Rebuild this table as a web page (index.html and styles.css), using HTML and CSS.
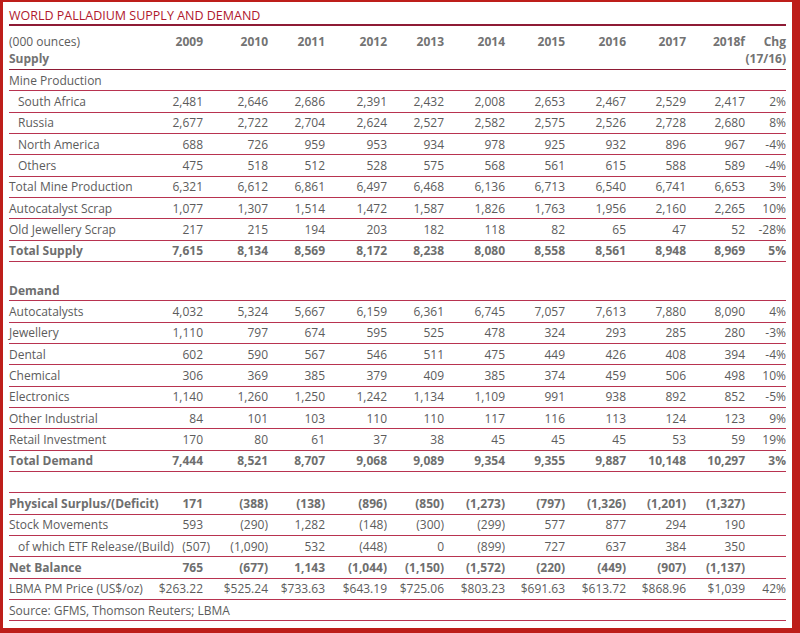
FILE: index.html
```html
<!DOCTYPE html>
<html>
<head>
<meta charset="utf-8">
<link rel="stylesheet" href="styles.css">
</head>
<body>
<div class="panel">
  <div class="title">WORLD PALLADIUM SUPPLY AND DEMAND</div>
  <table class="data">
    <colgroup>
      <col class="c-label"><col class="c-09"><col class="c-10"><col class="c-11"><col class="c-12"><col class="c-13"><col class="c-14"><col class="c-15"><col class="c-16"><col class="c-17"><col class="c-18"><col class="c-chg">
    </colgroup>
    <thead>
      <tr class="head">
        <th class="label"><span class="unit">(000 ounces)</span><br>Supply</th>
        <th>2009</th><th>2010</th><th>2011</th><th>2012</th><th>2013</th><th>2014</th><th>2015</th><th>2016</th><th>2017</th><th>2018f</th><th>Chg<br>(17/16)</th>
      </tr>
    </thead>
    <tbody>
      <tr><td class="label">Mine Production</td><td></td><td></td><td></td><td></td><td></td><td></td><td></td><td></td><td></td><td></td><td></td></tr>
      <tr><td class="label sub">South Africa</td><td>2,481</td><td>2,646</td><td>2,686</td><td>2,391</td><td>2,432</td><td>2,008</td><td>2,653</td><td>2,467</td><td>2,529</td><td>2,417</td><td>2%</td></tr>
      <tr><td class="label sub">Russia</td><td>2,677</td><td>2,722</td><td>2,704</td><td>2,624</td><td>2,527</td><td>2,582</td><td>2,575</td><td>2,526</td><td>2,728</td><td>2,680</td><td>8%</td></tr>
      <tr><td class="label sub">North America</td><td>688</td><td>726</td><td>959</td><td>953</td><td>934</td><td>978</td><td>925</td><td>932</td><td>896</td><td>967</td><td>-4%</td></tr>
      <tr><td class="label sub">Others</td><td>475</td><td>518</td><td>512</td><td>528</td><td>575</td><td>568</td><td>561</td><td>615</td><td>588</td><td>589</td><td>-4%</td></tr>
      <tr><td class="label">Total Mine Production</td><td>6,321</td><td>6,612</td><td>6,861</td><td>6,497</td><td>6,468</td><td>6,136</td><td>6,713</td><td>6,540</td><td>6,741</td><td>6,653</td><td>3%</td></tr>
      <tr><td class="label">Autocatalyst Scrap</td><td>1,077</td><td>1,307</td><td>1,514</td><td>1,472</td><td>1,587</td><td>1,826</td><td>1,763</td><td>1,956</td><td>2,160</td><td>2,265</td><td>10%</td></tr>
      <tr><td class="label">Old Jewellery Scrap</td><td>217</td><td>215</td><td>194</td><td>203</td><td>182</td><td>118</td><td>82</td><td>65</td><td>47</td><td>52</td><td>-28%</td></tr>
      <tr class="bold"><td class="label">Total Supply</td><td>7,615</td><td>8,134</td><td>8,569</td><td>8,172</td><td>8,238</td><td>8,080</td><td>8,558</td><td>8,561</td><td>8,948</td><td>8,969</td><td>5%</td></tr>
      <tr class="gap"><td colspan="12"></td></tr>
      <tr class="bold"><td class="label">Demand</td><td></td><td></td><td></td><td></td><td></td><td></td><td></td><td></td><td></td><td></td><td></td></tr>
      <tr><td class="label">Autocatalysts</td><td>4,032</td><td>5,324</td><td>5,667</td><td>6,159</td><td>6,361</td><td>6,745</td><td>7,057</td><td>7,613</td><td>7,880</td><td>8,090</td><td>4%</td></tr>
      <tr><td class="label">Jewellery</td><td>1,110</td><td>797</td><td>674</td><td>595</td><td>525</td><td>478</td><td>324</td><td>293</td><td>285</td><td>280</td><td>-3%</td></tr>
      <tr><td class="label">Dental</td><td>602</td><td>590</td><td>567</td><td>546</td><td>511</td><td>475</td><td>449</td><td>426</td><td>408</td><td>394</td><td>-4%</td></tr>
      <tr><td class="label">Chemical</td><td>306</td><td>369</td><td>385</td><td>379</td><td>409</td><td>385</td><td>374</td><td>459</td><td>506</td><td>498</td><td>10%</td></tr>
      <tr><td class="label">Electronics</td><td>1,140</td><td>1,260</td><td>1,250</td><td>1,242</td><td>1,134</td><td>1,109</td><td>991</td><td>938</td><td>892</td><td>852</td><td>-5%</td></tr>
      <tr><td class="label">Other Industrial</td><td>84</td><td>101</td><td>103</td><td>110</td><td>110</td><td>117</td><td>116</td><td>113</td><td>124</td><td>123</td><td>9%</td></tr>
      <tr><td class="label">Retail Investment</td><td>170</td><td>80</td><td>61</td><td>37</td><td>38</td><td>45</td><td>45</td><td>45</td><td>53</td><td>59</td><td>19%</td></tr>
      <tr class="bold"><td class="label">Total Demand</td><td>7,444</td><td>8,521</td><td>8,707</td><td>9,068</td><td>9,089</td><td>9,354</td><td>9,355</td><td>9,887</td><td>10,148</td><td>10,297</td><td>3%</td></tr>
      <tr class="blank"><td colspan="12"></td></tr>
      <tr class="bold"><td class="label">Physical Surplus/(Deficit)</td><td>171</td><td>(388)</td><td>(138)</td><td>(896)</td><td>(850)</td><td>(1,273)</td><td>(797)</td><td>(1,326)</td><td>(1,201)</td><td>(1,327)</td><td></td></tr>
      <tr><td class="label">Stock Movements</td><td>593</td><td>(290)</td><td>1,282</td><td>(148)</td><td>(300)</td><td>(299)</td><td>577</td><td>877</td><td>294</td><td>190</td><td></td></tr>
      <tr><td class="label sub">of which ETF Release/(Build)</td><td><span class="hang">(507)</span></td><td>(1,090)</td><td>532</td><td>(448)</td><td>0</td><td>(899)</td><td>727</td><td>637</td><td>384</td><td>350</td><td></td></tr>
      <tr class="bold"><td class="label">Net Balance</td><td>765</td><td>(677)</td><td>1,143</td><td>(1,044)</td><td>(1,150)</td><td>(1,572)</td><td>(220)</td><td>(449)</td><td>(907)</td><td>(1,137)</td><td></td></tr>
      <tr><td class="label">LBMA PM Price (US$/oz)</td><td>$263.22</td><td>$525.24</td><td>$733.63</td><td>$643.19</td><td>$725.06</td><td>$803.23</td><td>$691.63</td><td>$613.72</td><td>$868.96</td><td>$1,039</td><td>42%</td></tr>
      <tr><td class="label source" colspan="12">Source: GFMS, Thomson Reuters; LBMA</td></tr>
    </tbody>
  </table>
</div>
</body>
</html>
```

FILE: styles.css
```css
html, body {
  margin: 0;
  padding: 0;
}
body {
  background: #bd1e1a;
  width: 800px;
  height: 633px;
  padding: 2px 8px 5px 3px;
  box-sizing: border-box;
  font-family: "Open Sans", "Noto Sans", sans-serif;
  font-size: 12px;
  color: #5c5c5c;
}
.panel {
  background: #ffffff;
  height: 626px;
  padding: 0 6px;
  box-sizing: border-box;
}
.title {
  color: #b0182c;
  font-size: 12.5px;
  line-height: 17px;
  padding-top: 5px;
  border-bottom: 2px solid #8e1b35;
}
.data {
  width: 777px;
  border-collapse: collapse;
  table-layout: fixed;
}
.c-label { width: 139px; }
.c-09 { width: 55px; }
.c-10 { width: 65px; }
.c-11 { width: 57px; }
.c-12 { width: 62px; }
.c-13 { width: 57px; }
.c-14 { width: 61px; }
.c-15 { width: 60px; }
.c-16 { width: 61px; }
.c-17 { width: 60px; }
.c-18 { width: 59px; }
.c-chg { width: 41px; }

.data th, .data td {
  padding: 0;
  text-align: right;
  white-space: nowrap;
  vertical-align: middle;
}
.head th {
  font-weight: 700;
  color: #737373;
  line-height: 17px;
  padding: 7px 0 2px;
  vertical-align: top;
  border-bottom: 1px solid #8e1b35;
}
.head th.label { text-align: left; }
.unit { font-weight: 400; color: #5c5c5c; }
.data tbody td {
  height: 20.33px;
  line-height: 17px;
  border-bottom: 1px solid #b83350;
}
.data td.label {
  text-align: left;
  overflow: visible;
}
.data td.sub { padding-left: 9px; }
.bold td {
  font-weight: 700;
  color: #6e6e6e;
}
.data tr.gap td {
  height: 18px;
  border-bottom: none;
}
.hang {
  display: inline-block;
  margin-right: -7px;
}
.source { color: #5c5c5c; }
```
